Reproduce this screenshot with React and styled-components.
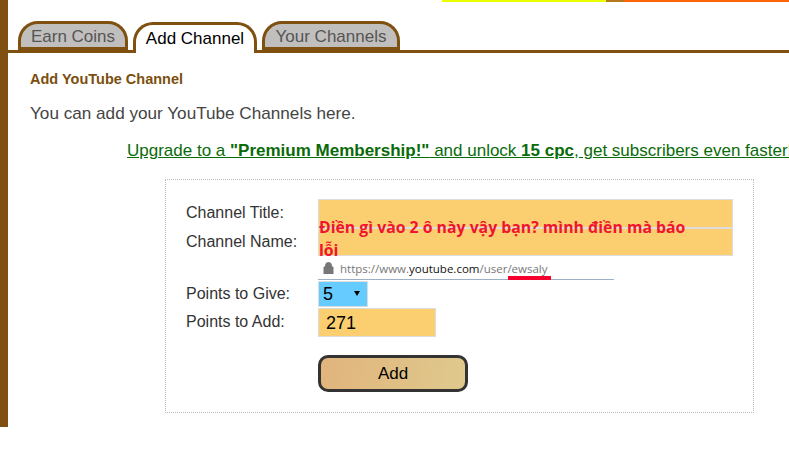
import React from 'react'
import styled, { createGlobalStyle } from 'styled-components'

const GlobalStyle = createGlobalStyle`
  html, body {
    margin: 0;
    padding: 0;
    background: #fff;
    overflow: hidden;
  }
  body {
    font-family: "Liberation Sans", Arial, sans-serif;
    font-size: 16px;
    color: #444;
  }
`

const Shell = styled.div`
  display: flex;
  width: 789px;
  height: 427px;
`

const Rail = styled.div`
  width: 8px;
  flex: none;
  background: #7f5010;
`

const Main = styled.div`
  flex: 1;
  min-width: 0;
  overflow: hidden;
`

const TopStrip = styled.div`
  display: flex;
  height: 2px;
  margin-left: 434px;
`

const StripPart = styled.div`
  width: ${(p) => p.$w}px;
  background: ${(p) => p.$color};
`

const TabBar = styled.div`
  display: flex;
  align-items: flex-end;
  gap: 5px;
  height: 29px;
  margin-top: 19px;
  padding-left: 10px;
  border-bottom: 3px solid #7f5010;
`

const Tab = styled.div`
  box-sizing: border-box;
  width: ${(p) => p.$w}px;
  height: ${(p) => (p.$active ? 31 : 29)}px;
  margin-bottom: ${(p) => (p.$active ? -3 : 0)}px;
  border: 3px solid #7f5010;
  border-bottom: ${(p) => (p.$active ? 'none' : '3px solid #7f5010')};
  border-radius: 20px 20px 0 0;
  background: ${(p) => (p.$active ? '#fff' : '#c1bfbd')};
  color: ${(p) => (p.$active ? '#000' : '#555')};
  font-size: 17px;
  line-height: ${(p) => (p.$active ? 28 : 25)}px;
  text-align: center;
  white-space: nowrap;
`

const Content = styled.div`
  padding: 18px 0 0 22px;
`

const Heading = styled.h2`
  margin: 0;
  color: #7b4f0e;
  font-size: 14.5px;
  font-weight: bold;
  line-height: 16px;
`

const Intro = styled.p`
  margin: 16px 0 0;
  font-size: 17.15px;
  line-height: 20px;
  white-space: nowrap;
`

const Upsell = styled.a`
  display: block;
  margin: 18px 0 0 97px;
  color: #0a6b0a;
  font-size: 17px;
  line-height: 20px;
  text-decoration: underline;
  white-space: nowrap;
`

const FormBox = styled.div`
  box-sizing: border-box;
  width: 589px;
  height: 234px;
  margin: 18px 0 0 135px;
  padding: 19px 20px 0 20px;
  border: 1px dotted #bbb;
`

const Row = styled.div`
  display: flex;
  align-items: center;
  height: ${(p) => p.$h}px;
  margin-bottom: ${(p) => p.$gap || 0}px;
`

const Label = styled.div`
  width: 132px;
  flex: none;
  padding-bottom: 1px;
  color: #333;
  font-size: 16px;
`

const Field = styled.div`
  box-sizing: border-box;
  width: ${(p) => p.$w}px;
  height: 100%;
  padding-left: 7px;
  border: 1px solid #ddd;
  background: #fbcf6f;
  color: #000;
  font-size: 18px;
  line-height: 28px;
`

const Fields = styled.div`
  position: relative;
`

const Note = styled.div`
  position: absolute;
  left: 133px;
  top: 17px;
  width: 380px;
  color: #f0142f;
  font-family: "Open Sans", sans-serif;
  font-size: 15.8px;
  font-weight: bold;
  line-height: 23px;
`

const UrlBar = styled.div`
  display: flex;
  align-items: center;
  box-sizing: border-box;
  position: relative;
  width: 296px;
  height: 21px;
  margin: 0 0 1px 132px;
  padding: 0 0 2px 5px;
  border-bottom: 1px solid #9db0c6;
  color: #777;
  font-family: "Open Sans", sans-serif;
  font-size: 11.5px;
`

const UrlDark = styled.span`
  color: #111;
`

const Lock = styled.svg`
  margin-right: 6px;
  flex: none;
`

const RedMark = styled.div`
  position: absolute;
  left: 190px;
  bottom: -1px;
  width: 43px;
  height: 4px;
  background: #f5002d;
`

const Select = styled.div`
  display: flex;
  align-items: center;
  justify-content: space-between;
  box-sizing: border-box;
  width: 50px;
  height: 100%;
  padding: 0 7px 0 4px;
  border: 1px solid #ddd;
  background: #66ccff;
  color: #000;
  font-size: 18px;
`

const Caret = styled.span`
  width: 0;
  height: 0;
  margin-bottom: 1px;
  border-left: 3px solid transparent;
  border-right: 3px solid transparent;
  border-top: 5px solid #000;
`

const AddButton = styled.button`
  display: block;
  box-sizing: border-box;
  width: 150px;
  height: 37px;
  margin: 18px 0 0 132px;
  padding: 0;
  border: 3px solid #333;
  border-radius: 10px;
  background: linear-gradient(100deg, #e1b47d, #dfc98c);
  color: #000;
  font-family: "Liberation Sans", Arial, sans-serif;
  font-size: 17px;
`

const App = () => {
  return (
    <>
      <GlobalStyle />
      <Shell>
        <Rail />
        <Main>
          <TopStrip>
            <StripPart $w={164} $color='#eaff00' />
            <StripPart $w={18} $color='#b57a20' />
            <StripPart $w={165} $color='#ff640a' />
          </TopStrip>
          <TabBar>
            <Tab $w={110}>Earn Coins</Tab>
            <Tab $w={124} $active>
              Add Channel
            </Tab>
            <Tab $w={138}>Your Channels</Tab>
          </TabBar>
          <Content>
            <Heading>Add YouTube Channel</Heading>
            <Intro>You can add your YouTube Channels here.</Intro>
            <Upsell>
              Upgrade to a <b>"Premium Membership!"</b> and unlock <b>15 cpc</b>
              , get subscribers even faster!
            </Upsell>
            <FormBox>
              <Fields>
                <Row $h={29}>
                  <Label>Channel Title:</Label>
                  <Field $w={415} />
                </Row>
                <Row $h={28} $gap={3}>
                  <Label>Channel Name:</Label>
                  <Field $w={415} />
                </Row>
                <Note>Điền gì vào 2 ô này vậy bạn? mình điền mà báo lỗi</Note>
                <UrlBar>
                  <Lock width='11' height='12' viewBox='0 0 11 12'>
                    <path
                      d='M2.5 5V3.5a3 3 0 0 1 6 0V5M1 5h9v7H1z'
                      fill='#777'
                      stroke='#777'
                    />
                  </Lock>
                  <span>
                    https://www.<UrlDark>youtube.com</UrlDark>/user/ewsaly
                  </span>
                  <RedMark />
                </UrlBar>
                <Row $h={26} $gap={1}>
                  <Label>Points to Give:</Label>
                  <Select>
                    5<Caret />
                  </Select>
                </Row>
                <Row $h={29}>
                  <Label>Points to Add:</Label>
                  <Field $w={118}>271</Field>
                </Row>
                <AddButton>Add</AddButton>
              </Fields>
            </FormBox>
          </Content>
        </Main>
      </Shell>
    </>
  )
}

export default App
